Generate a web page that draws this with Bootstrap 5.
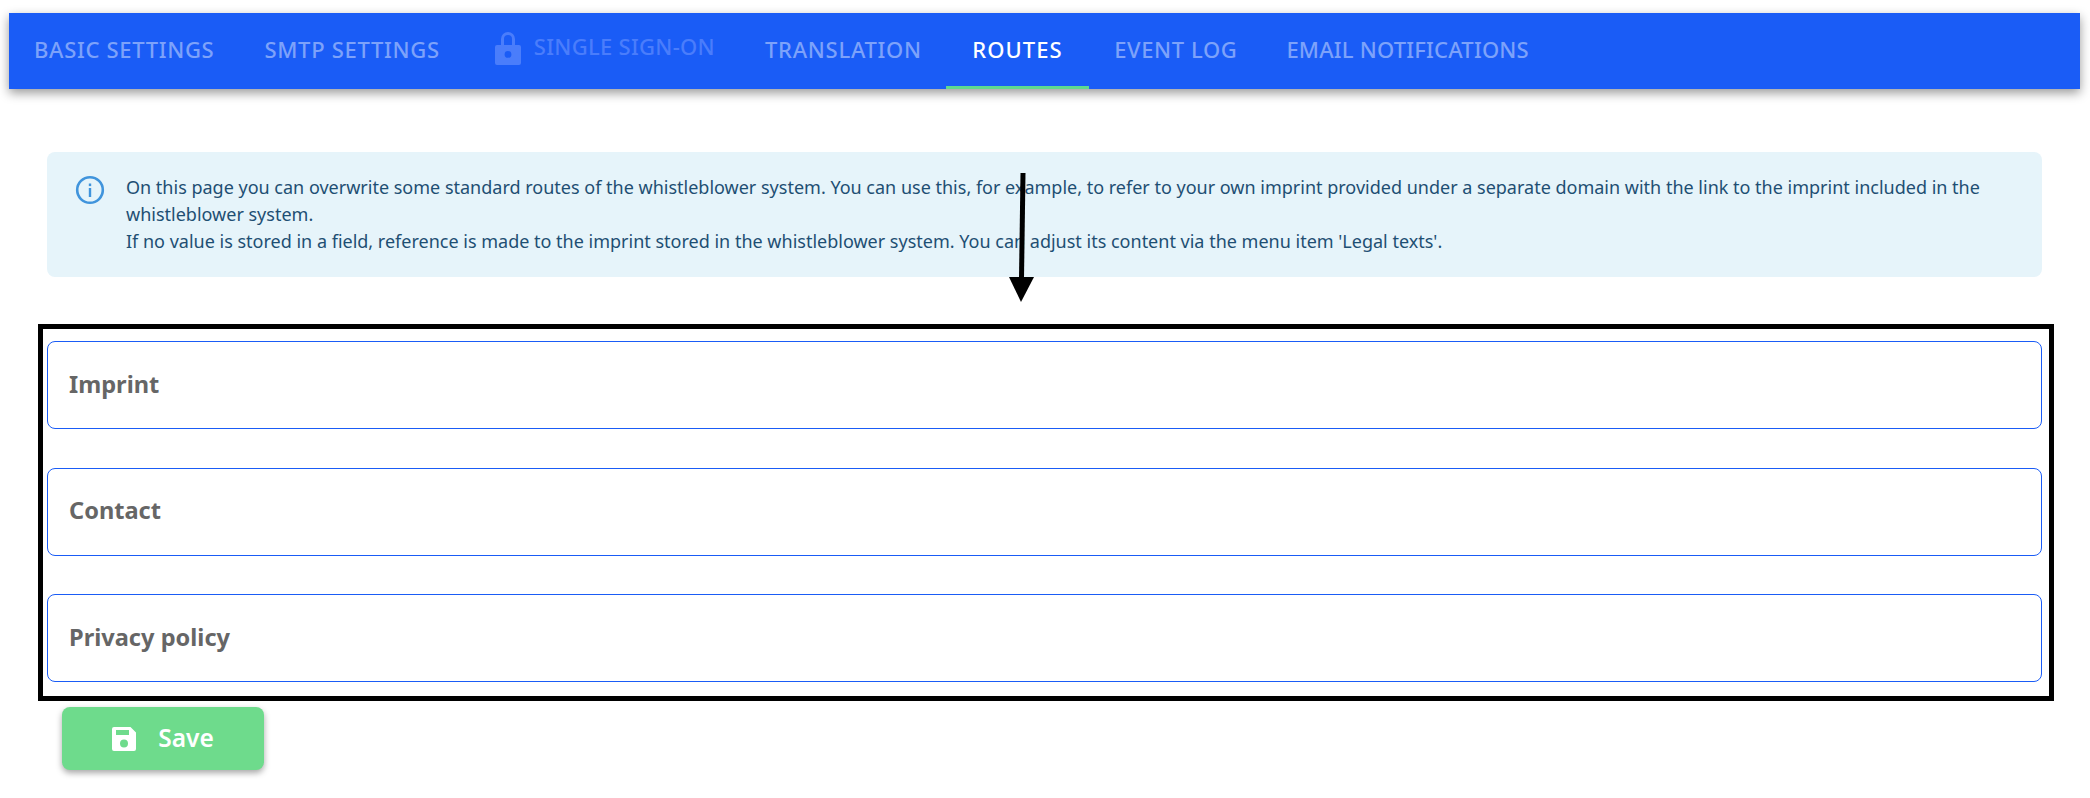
<!DOCTYPE html>
<html lang="en">
<head>
<meta charset="utf-8">
<title>Routes</title>
<link href="https://cdn.jsdelivr.net/npm/bootstrap@5.3.0/dist/css/bootstrap.min.css" rel="stylesheet">
<style>
body{background:#fff;font-family:"Noto Sans",sans-serif;overflow:hidden;}
.page-wrap{position:relative;padding:13px 10px 0 9px;height:798px;}
.top-tabs{background:#1a5cf6;height:76px;flex-wrap:nowrap;box-shadow:0 4px 10px rgba(0,0,0,.4);align-items:stretch;}
.top-tabs .nav-item{display:flex;}
.top-tabs .nav-link{color:#7da2fa;font-size:22px;font-weight:500;padding:0 25px;display:flex;align-items:center;border-bottom:3px solid transparent;border-radius:0;white-space:nowrap;}
.top-tabs .nav-item:nth-child(1) .nav-link{letter-spacing:.68px;}
.top-tabs .nav-item:nth-child(2) .nav-link{letter-spacing:.7px;}
.top-tabs .nav-item:nth-child(3) .nav-link{letter-spacing:.3px;}
.top-tabs .nav-item:nth-child(4) .nav-link{letter-spacing:.72px;}
.top-tabs .nav-item:nth-child(5) .nav-link{letter-spacing:1.04px;}
.top-tabs .nav-item:nth-child(6) .nav-link{letter-spacing:.6px;}
.top-tabs .nav-item:nth-child(7) .nav-link{letter-spacing:.2px;}
.top-tabs .nav-link.active{color:#fff;border-bottom-color:#5fd98e;background:transparent;padding:0 26.500px;}
.top-tabs .nav-link.disabled{color:#4a7dfb;padding:0 25px 6px 25px;}
.top-tabs .nav-item:nth-child(3){margin-left:5px;}
.top-tabs .nav-item:nth-child(5){margin-left:-1px;}
.top-tabs .nav-item:nth-child(7){margin-left:-1px;}
.lock-ic{width:26px;height:34px;margin-right:13px;fill:#4a7dfb;margin-top:3px;}
.info-box{margin:63px 38px 47px 38px;height:125px;background:#e6f4fa;color:#1e4f73;border:0;border-radius:8px;padding:22px 28px 0;font-size:18px;line-height:27px;display:flex;}
.info-ic{width:30px;height:30px;flex:none;margin-right:21px;margin-top:1px;}
.frame-box{border:5px solid #000;margin:0 26px 6px 29px;padding:12px 7px 14px 4px;}
.route-input{height:88px;border:1px solid #1a5cf6;border-radius:8px;padding:0 21px 3px;font-size:23.600px;font-weight:700;margin-bottom:38.500px;}
.route-input:last-child{margin-bottom:0;}
.route-input::placeholder{color:#666;opacity:1;}
.save-btn{margin-left:53px;width:202px;height:63px;background:#6edb8c;border:0;border-radius:8px;color:#fff;font-size:24.500px;font-weight:600;box-shadow:0 3px 6px rgba(0,0,0,.35);display:flex;align-items:center;justify-content:center;gap:22px;padding:0;}
.save-btn:hover{background:#6edb8c;color:#fff;}
.save-ic{width:24px;height:24px;fill:#fff;}
.note-arrow{position:absolute;left:1005px;top:170px;width:34px;height:134px;}
</style>
</head>
<body>
<div class="page-wrap">
  <ul class="nav top-tabs">
    <li class="nav-item"><a class="nav-link" href="#">BASIC SETTINGS</a></li>
    <li class="nav-item"><a class="nav-link" href="#">SMTP SETTINGS</a></li>
    <li class="nav-item"><a class="nav-link disabled" href="#"><svg class="lock-ic" viewBox="0 0 26 34"><path fill-rule="evenodd" d="M6 14V8a7 7 0 0 1 14 0v6h4a2 2 0 0 1 2 2v16a2 2 0 0 1-2 2H2a2 2 0 0 1-2-2V16a2 2 0 0 1 2-2zm3 0h8V8a4 4 0 0 0-8 0zm4 6a3.400 3.400 0 0 0-3.400 3.400 3.400 3.400 0 0 0 6.800 0A3.400 3.400 0 0 0 13 20z"/></svg>SINGLE SIGN-ON</a></li>
    <li class="nav-item"><a class="nav-link" href="#">TRANSLATION</a></li>
    <li class="nav-item"><a class="nav-link active" href="#">ROUTES</a></li>
    <li class="nav-item"><a class="nav-link" href="#">EVENT LOG</a></li>
    <li class="nav-item"><a class="nav-link" href="#">EMAIL NOTIFICATIONS</a></li>
  </ul>
  <div class="alert info-box" role="alert">
    <svg class="info-ic" viewBox="0 0 30 30"><circle cx="15" cy="15" r="12.800" fill="none" stroke="#4094dc" stroke-width="2.600"/><rect x="13.800" y="13" width="2.400" height="9" fill="#4094dc"/><rect x="13.800" y="8.500" width="2.400" height="2.600" fill="#4094dc"/></svg>
    <div>On this page you can overwrite some standard routes of the whistleblower system. You can use this, for example, to refer to your own imprint provided under a separate domain with the link to the imprint included in the whistleblower system.<br>If no value is stored in a field, reference is made to the imprint stored in the whistleblower system. You can adjust its content via the menu item 'Legal texts'.</div>
  </div>
  <div class="frame-box">
    <input class="form-control route-input" type="text" placeholder="Imprint">
    <input class="form-control route-input" type="text" placeholder="Contact">
    <input class="form-control route-input" type="text" placeholder="Privacy policy">
  </div>
  <button class="btn save-btn" type="button"><svg class="save-ic" viewBox="0 0 24 24"><path fill-rule="evenodd" d="M2 0h16.500L24 5.500V22a2 2 0 0 1-2 2H2a2 2 0 0 1-2-2V2a2 2 0 0 1 2-2zm2 3v5h13V3zm8 9.500a4 4 0 1 0 0 8 4 4 0 0 0 0-8z"/></svg>Save</button>
  <svg class="note-arrow" viewBox="0 0 34 134"><path d="M18 3 16.500 108" stroke="#000" stroke-width="5" fill="none"/><path d="M4 107H29L16 132z" fill="#000"/></svg>
</div>
<script src="https://cdn.jsdelivr.net/npm/bootstrap@5.3.0/dist/js/bootstrap.bundle.min.js"></script>
</body>
</html>
